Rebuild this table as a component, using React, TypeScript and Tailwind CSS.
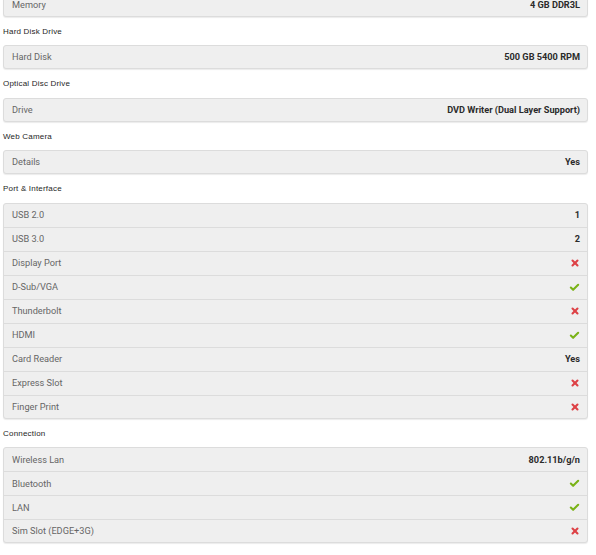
import { Check, X } from "lucide-react";

type Value = string | boolean;

type Section = {
  title?: string;
  rows: [string, Value][];
};

const sections: Section[] = [
  { rows: [["Memory", "4 GB DDR3L"]] },
  { title: "Hard Disk Drive", rows: [["Hard Disk", "500 GB 5400 RPM"]] },
  { title: "Optical Disc Drive", rows: [["Drive", "DVD Writer (Dual Layer Support)"]] },
  { title: "Web Camera", rows: [["Details", "Yes"]] },
  {
    title: "Port & Interface",
    rows: [
      ["USB 2.0", "1"],
      ["USB 3.0", "2"],
      ["Display Port", false],
      ["D-Sub/VGA", true],
      ["Thunderbolt", false],
      ["HDMI", true],
      ["Card Reader", "Yes"],
      ["Express Slot", false],
      ["Finger Print", false],
    ],
  },
  {
    title: "Connection",
    rows: [
      ["Wireless Lan", "802.11b/g/n"],
      ["Bluetooth", true],
      ["LAN", true],
      ["Sim Slot (EDGE+3G)", false],
    ],
  },
];

const Cell = ({ value }: { value: Value }) => {
  if (value === true) return <Check className="w-[11px] h-[11px] text-[#7ab317]" strokeWidth={4.5} />;
  if (value === false) return <X className="w-[10px] h-[10px] text-[#dd4146]" strokeWidth={5} />;
  return <span className="font-bold text-[#2b2b2b]">{value}</span>;
};

export default function App() {
  return (
    <div className="bg-white w-[596px] h-[555px] overflow-hidden font-['Roboto',sans-serif]">
      <div className="ml-[3px] w-[585px] -mt-[7px]">
        {sections.map((s, i) => (
          <div key={i}>
            {s.title && (
              <div className="h-[28.4px] pt-[10px] leading-[10px] text-[8px] text-[#1e1e1e] font-['Liberation_Sans',sans-serif] tracking-[0.2px]">
                {s.title}
              </div>
            )}
            <div className="bg-[#efefef] border border-[#dcdcdc] rounded-[3px] shadow-[0_1px_1px_rgba(0,0,0,0.08)]">
              {s.rows.map(([label, value], j) => {
                const last = j === s.rows.length - 1;
                return (
                  <div
                    key={j}
                    className={`flex items-center justify-between pl-[8px] pr-[7px] text-[9.2px] ${
                      last ? "h-[22px]" : "h-[24px] border-b border-[#dcdcdc]"
                    }`}
                  >
                    <span className="text-[#666]">{label}</span>
                    <Cell value={value} />
                  </div>
                );
              })}
            </div>
          </div>
        ))}
      </div>
    </div>
  );
}
